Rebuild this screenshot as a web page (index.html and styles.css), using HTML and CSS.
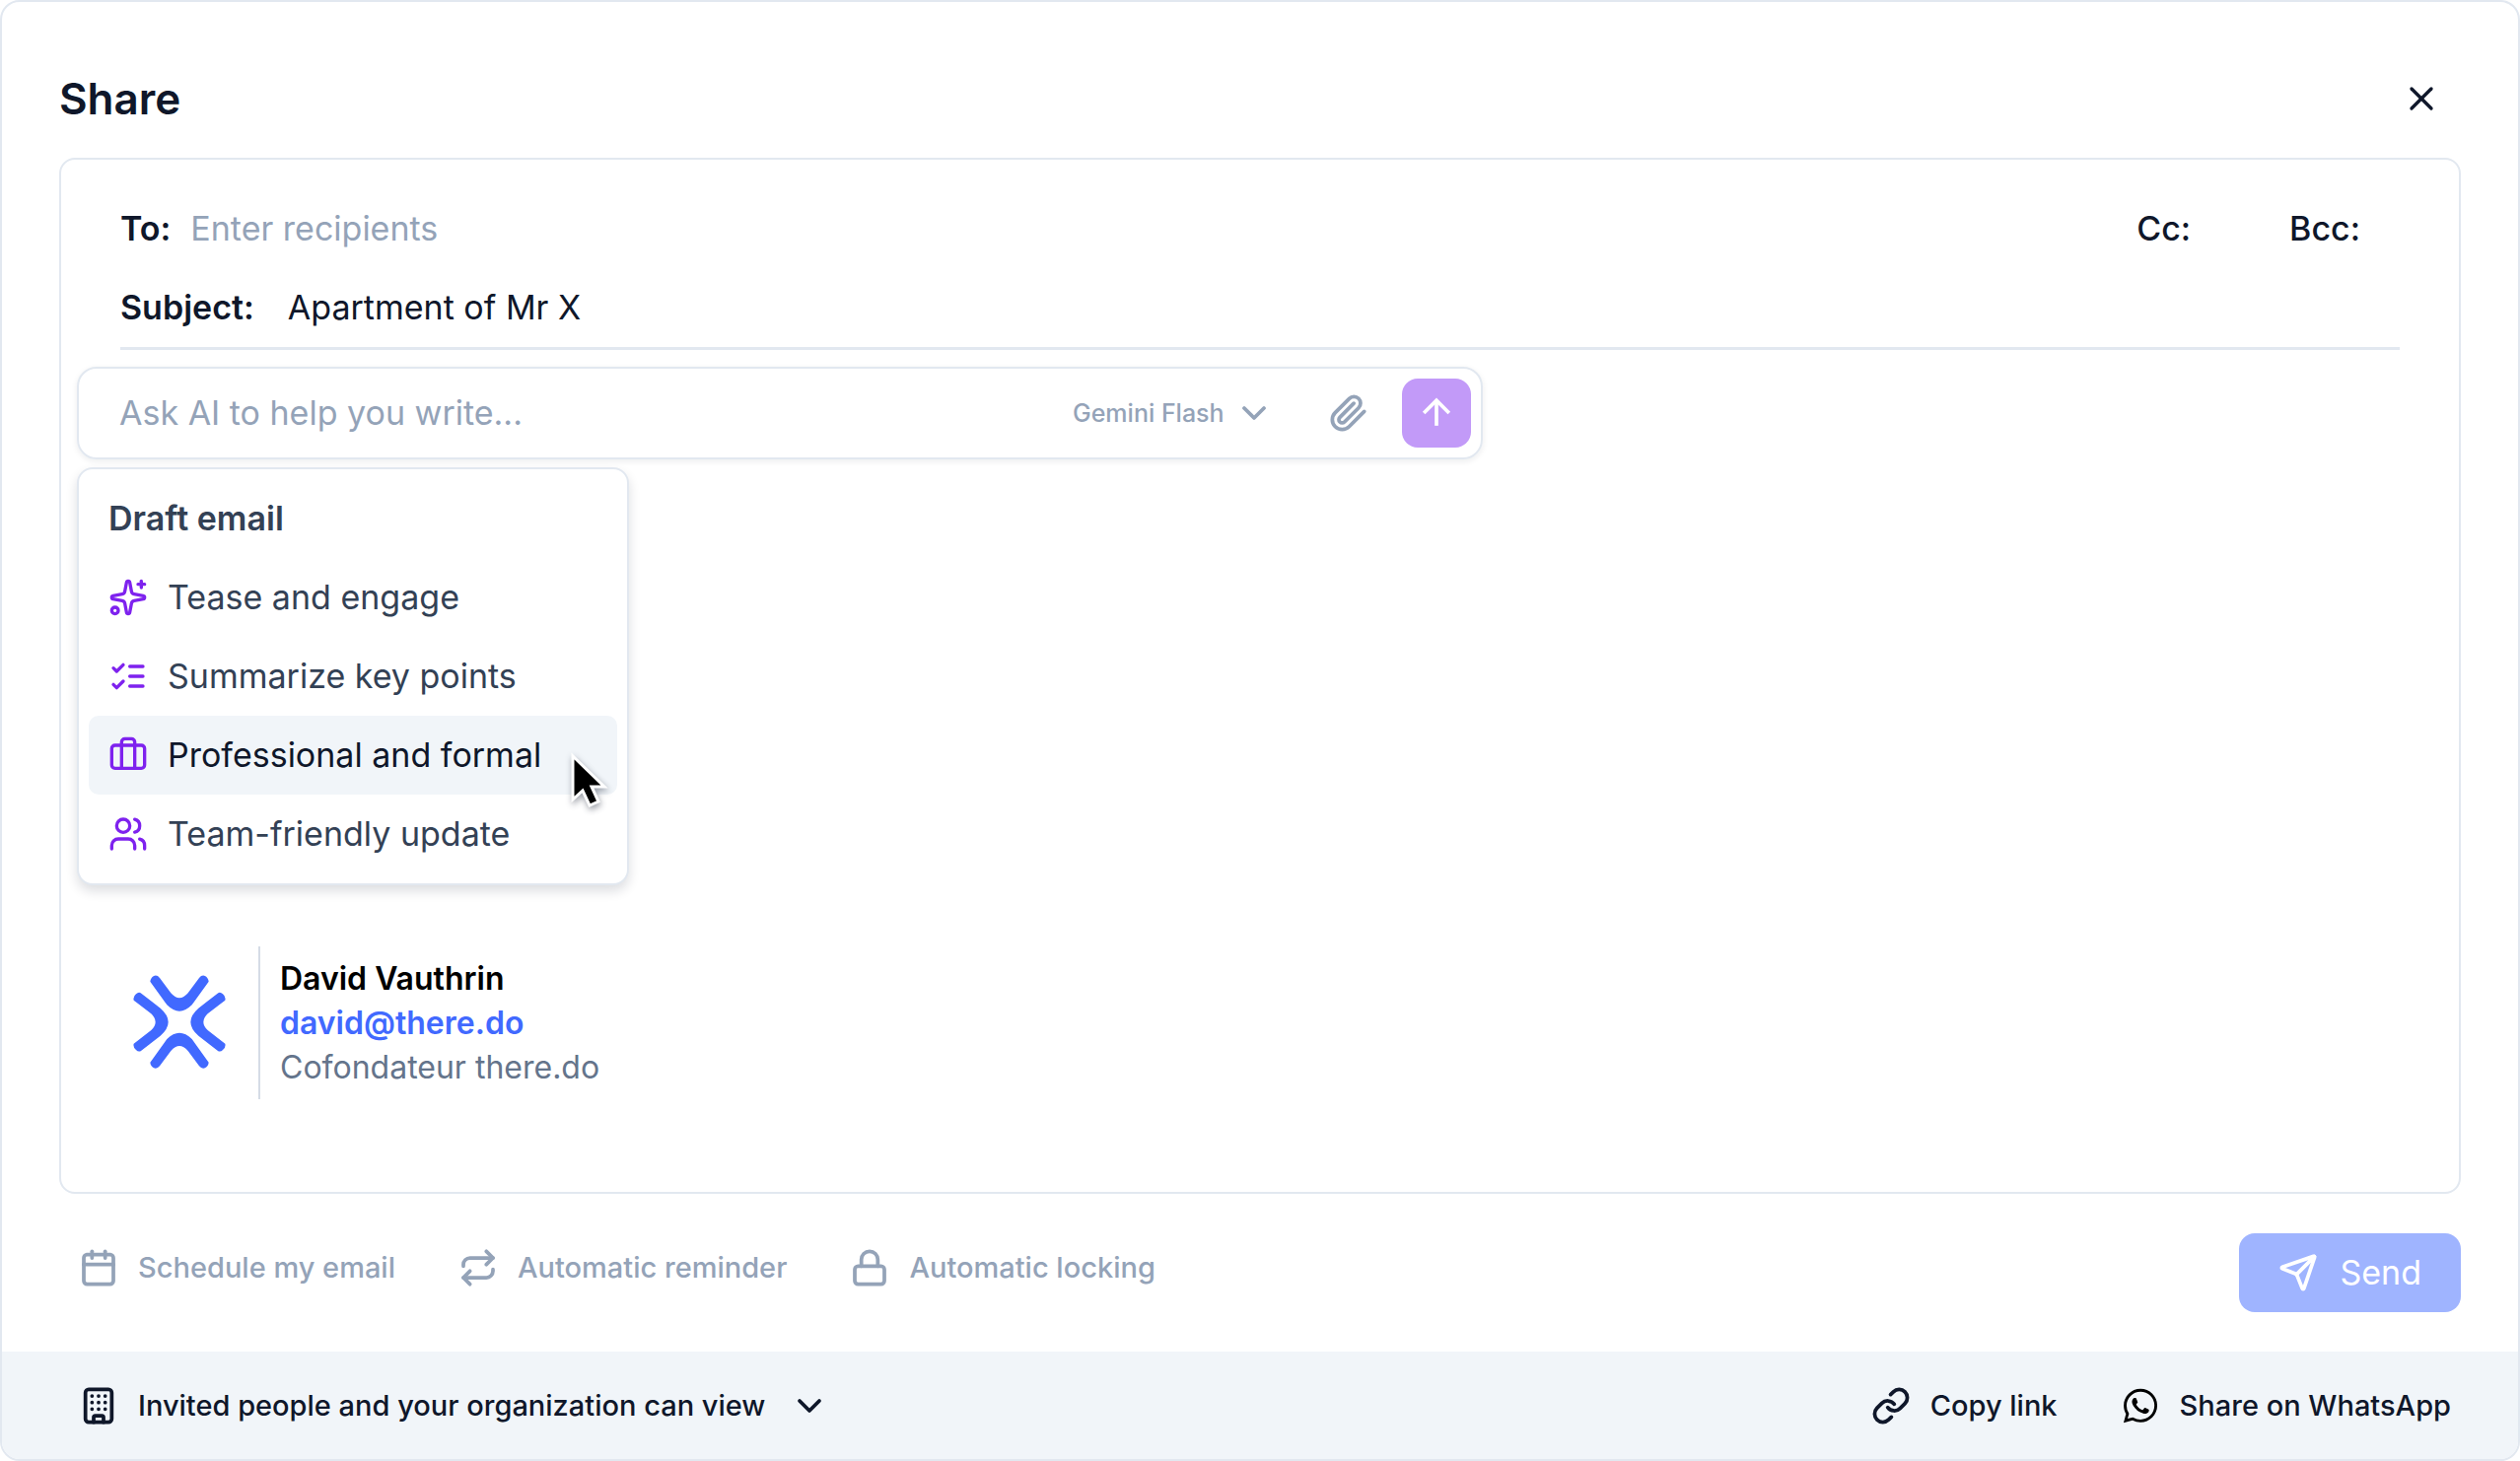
FILE: index.html
```html
<!DOCTYPE html>
<html lang="en">
  <head>
    <meta charset="UTF-8" />
    <title>Share</title>
    <meta name="viewport" content="width=device-width, initial-scale=1" />
    <link rel="stylesheet" href="styles.css">
  </head>
  <body>
    <main class="dialog">
      <header class="dialog-header">
        <h1>Share</h1>
        <button class="btn-icon" type="button" aria-label="Close">
          <svg class="icon" viewBox="0 0 24 24"><path d="M18 6 6 18" /><path d="m6 6 12 12" /></svg>
        </button>
      </header>

      <section class="composer">
        <div class="fields">
          <div class="field">
            <label for="to">To:</label>
            <input type="text" id="to" placeholder="Enter recipients" />
            <div class="copies">
              <button type="button">Cc:</button>
              <button type="button">Bcc:</button>
            </div>
          </div>
          <div class="field field-subject">
            <label for="subject">Subject:</label>
            <input type="text" id="subject" value="Apartment of Mr X" />
          </div>
        </div>

        <div class="assistant">
          <div class="prompt">
            <input type="text" id="prompt" placeholder="Ask AI to help you write..." aria-label="Ask AI" />
            <div class="select select-model">
              <select id="model" aria-label="Model">
                <option>Gemini Flash</option>
              </select>
              <svg class="icon icon-bold" viewBox="0 0 24 24"><path d="m6 9 6 6 6-6" /></svg>
            </div>
            <button class="btn-icon btn-attach" type="button" aria-label="Attach a file">
              <svg class="icon icon-bold" viewBox="0 0 24 24"><path d="m21.44 11.05-9.19 9.19a6 6 0 0 1-8.49-8.49l8.57-8.57A4 4 0 1 1 18 8.84l-8.59 8.57a2 2 0 0 1-2.83-2.83l8.49-8.48" /></svg>
            </button>
            <button class="btn-submit" type="button" aria-label="Generate">
              <svg class="icon" viewBox="0 0 24 24"><path d="m5 12 7-7 7 7" /><path d="M12 19V5" /></svg>
            </button>
          </div>

          <div class="menu" role="menu">
            <h2>Draft email</h2>
            <button class="menu-item" type="button" role="menuitem">
              <svg class="icon" viewBox="0 0 24 24">
                <path d="M11.017 2.814a1 1 0 0 1 1.966 0l1.051 5.558a2 2 0 0 0 1.594 1.594l5.558 1.051a1 1 0 0 1 0 1.966l-5.558 1.051a2 2 0 0 0-1.594 1.594l-1.051 5.558a1 1 0 0 1-1.966 0l-1.051-5.558a2 2 0 0 0-1.594-1.594l-5.558-1.051a1 1 0 0 1 0-1.966l5.558-1.051a2 2 0 0 0 1.594-1.594z" />
                <path d="M20 2v4" /><path d="M22 4h-4" /><circle cx="4" cy="20" r="2" />
              </svg>
              Tease and engage
            </button>
            <button class="menu-item" type="button" role="menuitem">
              <svg class="icon" viewBox="0 0 24 24">
                <path d="m3 17 2 2 4-4" /><path d="m3 7 2 2 4-4" />
                <path d="M13 6h8" /><path d="M13 12h8" /><path d="M13 18h8" />
              </svg>
              Summarize key points
            </button>
            <button class="menu-item active" type="button" role="menuitem">
              <svg class="icon" viewBox="0 0 24 24">
                <path d="M16 20V4a2 2 0 0 0-2-2h-4a2 2 0 0 0-2 2v16" />
                <rect width="20" height="14" x="2" y="6" rx="2" />
              </svg>
              Professional and formal
              <svg class="pointer" viewBox="0 0 36 56">
                <path d="M2 3v44l10-9 7 15 9-4-7-15h13z" />
              </svg>
            </button>
            <button class="menu-item" type="button" role="menuitem">
              <svg class="icon" viewBox="0 0 24 24">
                <path d="M16 21v-2a4 4 0 0 0-4-4H6a4 4 0 0 0-4 4v2" />
                <circle cx="9" cy="7" r="4" />
                <path d="M22 21v-2a4 4 0 0 0-3-3.87" /><path d="M16 3.13a4 4 0 0 1 0 7.75" />
              </svg>
              Team-friendly update
            </button>
          </div>
        </div>

        <div class="signature">
          <svg class="logo" viewBox="0 0 390 390">
            <path d="M97 77Q98 66 108 60Q118 56 126 66L160 112Q186 142 212 112L246 66Q254 56 264 60Q274 66 275 77L224 148Q186 186 148 148Z" />
            <path d="M97 323Q98 334 108 340Q118 344 126 334L160 288Q186 258 212 288L246 334Q254 344 264 340Q274 334 275 323L224 252Q186 214 148 252Z" />
            <path d="M47 134Q44 123 54 115Q62 107 70 113L128 158Q176 200 128 242L70 287Q62 293 54 285Q44 277 47 266L100 225Q126 200 100 175Z" />
            <path d="M325 134Q328 123 318 115Q310 107 302 113L244 158Q196 200 244 242L302 287Q310 293 318 285Q328 277 325 266L272 225Q246 200 272 175Z" />
          </svg>
          <div class="signature-text">
            <strong>David Vauthrin</strong>
            <a href="mailto:david@there.do">david@there.do</a>
            <span>Cofondateur there.do</span>
          </div>
        </div>
      </section>

      <div class="actions">
        <div class="options">
          <button class="btn-text" type="button">
            <svg class="icon icon-bold" viewBox="0 0 24 24">
              <path d="M8 2v4" /><path d="M16 2v4" />
              <rect width="18" height="18" x="3" y="4" rx="2" /><path d="M3 10h18" />
            </svg>
            Schedule my email
          </button>
          <button class="btn-text" type="button">
            <svg class="icon icon-bold" viewBox="0 0 24 24">
              <path d="m17 2 4 4-4 4" /><path d="M3 11v-1a4 4 0 0 1 4-4h14" />
              <path d="m7 22-4-4 4-4" /><path d="M21 13v1a4 4 0 0 1-4 4H3" />
            </svg>
            Automatic reminder
          </button>
          <button class="btn-text" type="button">
            <svg class="icon icon-bold" viewBox="0 0 24 24">
              <rect width="18" height="11" x="3" y="11" rx="2" /><path d="M7 11V7a5 5 0 0 1 10 0v4" />
            </svg>
            Automatic locking
          </button>
        </div>
        <button class="btn-send" type="button">
          <svg class="icon icon-bold" viewBox="0 0 24 24">
            <path d="M14.536 21.686a.5.5 0 0 0 .937-.024l6.5-19a.496.496 0 0 0-.635-.635l-19 6.5a.5.5 0 0 0-.024.937l7.93 3.18a2 2 0 0 1 1.112 1.11z" />
            <path d="m21.854 2.147-10.94 10.939" />
          </svg>
          Send
        </button>
      </div>

      <footer class="dialog-footer">
        <div class="access">
          <svg class="icon icon-bold" viewBox="0 0 24 24">
            <rect width="16" height="20" x="4" y="2" rx="2" />
            <path d="M9 22v-3a1 1 0 0 1 1-1h4a1 1 0 0 1 1 1v3" />
            <path d="M8 6h.01M12 6h.01M16 6h.01M8 10h.01M12 10h.01M16 10h.01M8 14h.01M12 14h.01M16 14h.01" />
          </svg>
          <div class="select select-access">
            <select id="access" aria-label="Who can view">
              <option>Invited people and your organization can view</option>
            </select>
            <svg class="icon icon-bold" viewBox="0 0 24 24"><path d="m6 9 6 6 6-6" /></svg>
          </div>
        </div>
        <div class="links">
          <button class="btn-text" type="button">
            <svg class="icon icon-bold" viewBox="0 0 24 24">
              <path d="M10 13a5 5 0 0 0 7.54.54l3-3a5 5 0 0 0-7.07-7.07l-1.72 1.71" />
              <path d="M14 11a5 5 0 0 0-7.54-.54l-3 3a5 5 0 0 0 7.07 7.07l1.71-1.71" />
            </svg>
            Copy link
          </button>
          <button class="btn-text" type="button">
            <svg class="icon-whatsapp" viewBox="-2 -2 28 28">
              <path d="M17.472 14.382c-.297-.149-1.758-.867-2.03-.967-.273-.099-.471-.148-.67.15-.197.297-.767.966-.94 1.164-.173.199-.347.223-.644.075-.297-.15-1.255-.463-2.39-1.475-.883-.788-1.48-1.761-1.653-2.059-.173-.297-.018-.458.13-.606.134-.133.298-.347.446-.52.149-.174.198-.298.298-.497.099-.198.05-.371-.025-.52-.075-.149-.669-1.612-.916-2.207-.242-.579-.487-.5-.669-.51-.173-.008-.371-.01-.57-.01-.198 0-.52.074-.792.372-.272.297-1.04 1.016-1.04 2.479 0 1.462 1.065 2.875 1.213 3.074.149.198 2.096 3.2 5.077 4.487.709.306 1.262.489 1.694.625.712.227 1.36.195 1.871.118.571-.085 1.758-.719 2.006-1.413.248-.694.248-1.289.173-1.413-.074-.124-.272-.198-.57-.347m-5.421 7.403h-.004a9.87 9.87 0 01-5.031-1.378l-.361-.214-3.741.982.998-3.648-.235-.374a9.86 9.86 0 01-1.51-5.26c.001-5.45 4.436-9.884 9.888-9.884 2.64 0 5.122 1.03 6.988 2.898a9.825 9.825 0 012.893 6.994c-.003 5.45-4.437 9.884-9.885 9.884m8.413-18.297A11.815 11.815 0 0012.05 0C5.495 0 .16 5.335.157 11.892c0 2.096.547 4.142 1.588 5.945L.057 24l6.305-1.654a11.882 11.882 0 005.683 1.448h.005c6.554 0 11.89-5.335 11.893-11.893a11.821 11.821 0 00-3.48-8.413z" />
            </svg>
            Share on WhatsApp
          </button>
        </div>
      </footer>
    </main>
  </body>
</html>
```

FILE: styles.css
```css
:root {
  --border: #e2e8f0;
  --muted-bg: #f1f5f9;
  --placeholder: #94a3b8;
  --text: #0f172a;
  --text-soft: #334155;
  --violet: #7e22ee;
  --blue: #4169ff;
}
* {
  box-sizing: border-box;
}
body {
  margin: 0;
  font-family: Inter, "Liberation Sans", sans-serif;
  font-size: 34px;
  line-height: 48px;
  background: #fff;
  color: var(--text);
}
h1,
h2 {
  margin: 0;
  font-weight: 600;
}
button,
input,
select {
  margin: 0;
  padding: 0;
  border: none;
  background: transparent;
  font: inherit;
  color: inherit;
}
button,
select {
  cursor: pointer;
}
input {
  flex: 1;
  min-width: 0;
  outline: none;
}
input::placeholder {
  color: var(--placeholder);
  opacity: 1;
}

/* ---------- Icons ---------- */
.icon {
  width: 40px;
  height: 40px;
  flex: none;
  fill: none;
  stroke: currentColor;
  stroke-width: 2;
  stroke-linecap: round;
  stroke-linejoin: round;
}
.icon-bold {
  stroke-width: 2.25;
}
.icon-whatsapp {
  width: 40px;
  height: 40px;
  fill: #000;
}
.btn-icon {
  display: flex;
}

/* ---------- Dialog ---------- */
.dialog {
  min-height: 100vh;
  display: flex;
  flex-direction: column;
  border: 2px solid var(--border);
  border-radius: 20px;
  overflow: hidden;
}
.dialog-header {
  display: flex;
  justify-content: space-between;
  align-items: center;
  padding: 67px 78px 29px 58px;
}
h1 {
  font-size: 44px;
  line-height: 62px;
}

/* ---------- Composer ---------- */
.composer {
  flex: 1;
  display: flex;
  flex-direction: column;
  margin: 0 58px;
  padding: 30px 16px 94px;
  border: 2px solid var(--border);
  border-radius: 16px;
}
.fields {
  margin: 0 44px;
  border-bottom: 3px solid var(--border);
}
.field {
  display: flex;
  align-items: center;
  gap: 20px;
  height: 80px;
}
.field label {
  font-weight: 600;
}
.field-subject {
  gap: 34px;
}
.copies {
  display: flex;
  gap: 100px;
  margin-right: 40px;
  font-weight: 500;
}

/* ---------- AI assistant ---------- */
.assistant {
  position: relative;
  margin-top: 17px;
}
.prompt {
  display: flex;
  align-items: center;
  max-width: 1426px;
  padding: 10px 10px 10px 41px;
  border: 2px solid var(--border);
  border-radius: 20px;
  box-shadow: 0 2px 6px rgba(15, 23, 42, 0.08);
}
.select {
  display: grid;
  align-items: center;
}
.select select {
  grid-area: 1 / 1;
  appearance: none;
}
.select .icon {
  grid-area: 1 / 1;
  justify-self: end;
  pointer-events: none;
}
.select-model {
  color: var(--placeholder);
  font-size: 25px;
  font-weight: 500;
}
.select-model select {
  padding-right: 50px;
}
.btn-attach {
  margin: 0 34px 0 56px;
  color: var(--placeholder);
}
.btn-submit {
  display: flex;
  justify-content: center;
  align-items: center;
  width: 70px;
  height: 70px;
  border-radius: 16px;
  background: #c29af8;
  color: #fff;
}
.btn-submit .icon {
  width: 44px;
  height: 44px;
  stroke-linecap: butt;
  stroke-linejoin: miter;
}
.menu {
  position: absolute;
  top: calc(100% + 8px);
  left: 0;
  width: 560px;
  padding: 10px;
  background: #fff;
  border: 2px solid var(--border);
  border-radius: 16px;
  box-shadow: 0 6px 12px rgba(15, 23, 42, 0.14);
  color: var(--text-soft);
}
h2 {
  padding: 16px 20px;
  font-size: 34px;
  line-height: 48px;
}
.menu-item {
  position: relative;
  display: flex;
  align-items: center;
  gap: 20px;
  width: 100%;
  height: 80px;
  padding: 0 20px;
  border-radius: 10px;
}
.menu-item .icon {
  color: var(--violet);
}
.menu-item.active {
  background: var(--muted-bg);
  color: var(--text);
}
.pointer {
  position: absolute;
  top: 38px;
  right: 11px;
  width: 36px;
  height: 56px;
  overflow: visible;
  fill: #000;
  stroke: #fff;
  stroke-width: 3;
  filter: drop-shadow(1px 3px 3px rgba(15, 23, 42, 0.4));
}

/* ---------- Signature ---------- */
.signature {
  display: flex;
  align-items: flex-start;
  margin-top: auto;
  margin-left: 42px;
}
.logo {
  width: 130px;
  height: 130px;
  margin-top: 10px;
  fill: var(--blue);
}
.signature-text {
  display: flex;
  flex-direction: column;
  margin-left: 12px;
  padding: 10px 0 10px 20px;
  border-left: 2px solid #d5dce6;
  font-size: 32px;
  line-height: 45px;
}
.signature-text strong {
  font-weight: 600;
  color: #000;
}
.signature-text a {
  font-weight: 600;
  color: var(--blue);
  text-decoration: none;
}
.signature-text span {
  color: #64748b;
}

/* ---------- Actions ---------- */
.actions {
  display: flex;
  justify-content: space-between;
  padding: 40px 58px;
}
.options,
.links {
  display: flex;
  align-items: center;
  gap: 64px;
}
.options {
  height: 70px;
  padding-left: 20px;
  color: var(--placeholder);
}
.btn-text {
  display: flex;
  align-items: center;
  gap: 20px;
  font-size: 29px;
  font-weight: 500;
}
.btn-send {
  display: flex;
  align-items: center;
  gap: 22px;
  height: 80px;
  padding: 0 40px;
  border-radius: 16px;
  background: #9fb4ff;
  color: #fff;
}

/* ---------- Footer ---------- */
.dialog-footer {
  display: flex;
  justify-content: space-between;
  align-items: center;
  height: 109px;
  padding: 0 68px 0 78px;
  background: var(--muted-bg);
}
.access {
  display: flex;
  align-items: center;
  gap: 20px;
}
.select-access {
  font-size: 29px;
  font-weight: 500;
}
.select-access select {
  padding-right: 64px;
}
```
